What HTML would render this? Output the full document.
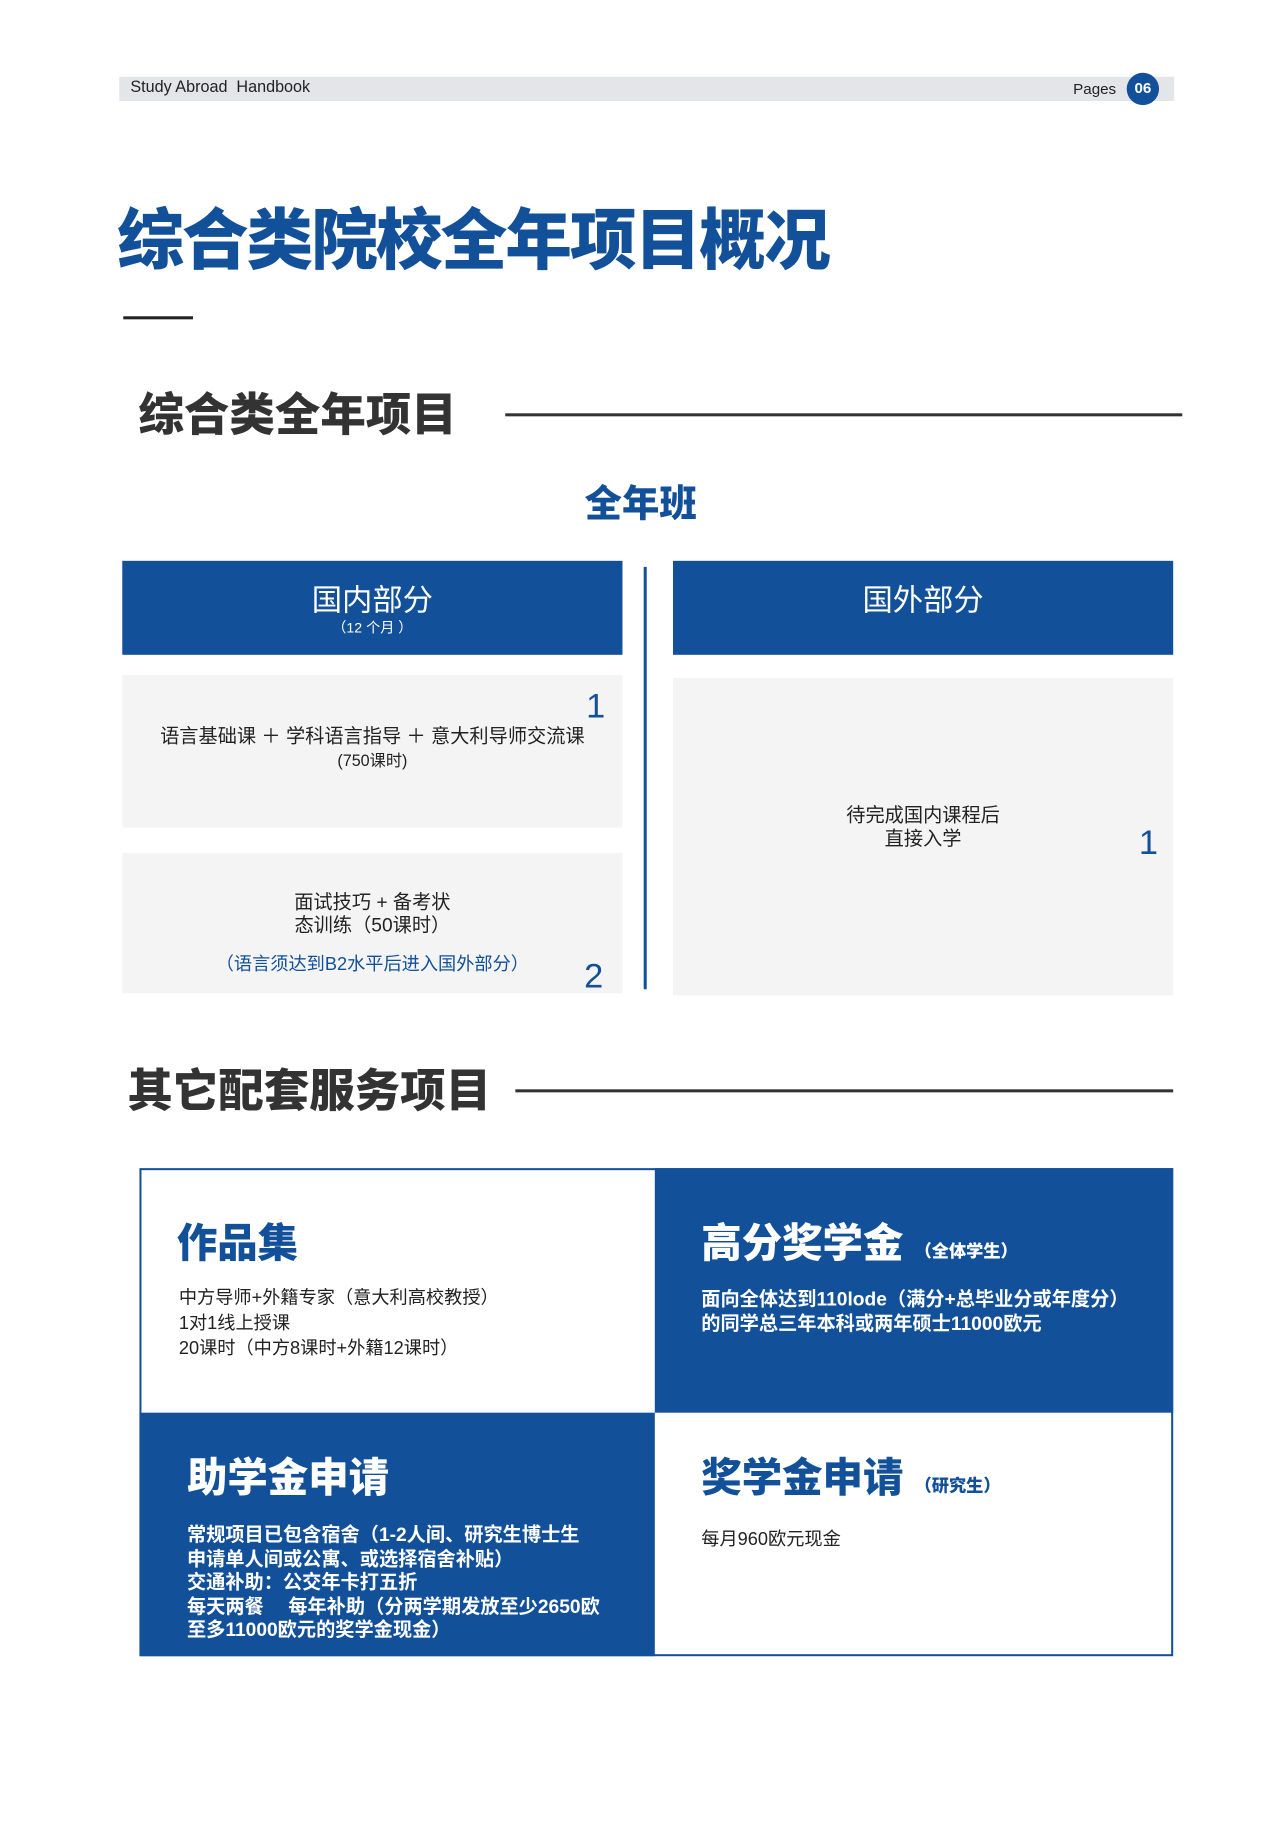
<!DOCTYPE html>
<html><head><meta charset="utf-8"><style>
*{margin:0;padding:0;box-sizing:border-box}
body{width:1280px;height:1810px;background:#fff;position:relative;font-family:"Liberation Sans","Noto Sans CJK SC",sans-serif;color:#222;overflow:hidden}
#w{position:absolute;left:0;top:0;width:1280px;height:1810px;transform:scale(1.0105);transform-origin:0 0}
.a{position:absolute}
.blue{color:#13509a}
.bb{background:#13509a}
.c{text-align:center}
.t{font-size:19px;line-height:23px}
</style></head><body><div id="w">
<div class="a" style="left:118px;top:76px;width:1044px;height:24px;background:#e4e5e8"></div>
<div class="a" style="left:129px;top:78px;font-size:16px">Study Abroad&nbsp; Handbook</div>
<div class="a" style="left:1062px;top:80px;font-size:15px">Pages</div>
<div class="a bb" style="left:1115px;top:72px;width:32px;height:32px;border-radius:50%;color:#fff;font-size:15px;font-weight:bold;line-height:32px;text-align:center">06</div>

<div class="a blue" style="left:116px;top:198px;font-size:66px;font-weight:900;letter-spacing:-2px;line-height:80px">综合类院校全年项目概况</div>
<div class="a" style="left:122px;top:313px;width:69px;height:3px;background:#222"></div>

<div class="a" style="left:137px;top:385px;font-size:45px;font-weight:900;color:#333;line-height:52px">综合类全年项目</div>
<div class="a" style="left:500px;top:409px;width:670px;height:3px;background:#333"></div>

<div class="a blue c" style="left:534px;top:468px;width:200px;font-size:37px;font-weight:900">全年班</div>

<div class="a bb c" style="left:121px;top:555px;width:495px;height:93px;color:#fff;padding-top:24px"><div style="font-size:30px;line-height:32px">国内部分</div><div style="font-size:14px">（12 个月 ）</div></div>
<div class="a bb c" style="left:666px;top:555px;width:495px;height:93px;color:#fff;padding-top:24px"><div style="font-size:30px;line-height:32px">国外部分</div></div>
<div class="a bb" style="left:637px;top:561px;width:3px;height:418px"></div>

<div class="a" style="left:121px;top:668px;width:495px;height:151px;background:#f4f4f5"></div>
<div class="a c t" style="left:121px;top:718px;width:495px">语言基础课 ＋ 学科语言指导 ＋ 意大利导师交流课<br><span style="font-size:16px">(750课时)</span></div>
<div class="a blue" style="left:580px;top:680px;font-size:34px">1</div>

<div class="a" style="left:121px;top:844px;width:495px;height:139px;background:#f4f4f5"></div>
<div class="a c t" style="left:121px;top:882px;width:495px">面试技巧 + 备考状<br>态训练（50课时）</div>
<div class="a c blue" style="left:121px;top:940px;width:495px;font-size:18px">（语言须达到B2水平后进入国外部分）</div>
<div class="a blue" style="left:578px;top:947px;font-size:34px">2</div>

<div class="a" style="left:666px;top:671px;width:495px;height:314px;background:#f4f4f5"></div>
<div class="a c t" style="left:666px;top:796px;width:495px">待完成国内课程后<br>直接入学</div>
<div class="a blue" style="left:1127px;top:815px;font-size:34px">1</div>

<div class="a" style="left:126px;top:1054px;font-size:45px;font-weight:900;color:#333;line-height:52px">其它配套服务项目</div>
<div class="a" style="left:510px;top:1078px;width:651px;height:3px;background:#333"></div>

<div class="a" style="left:138px;top:1156px;width:1023px;height:483px;border:2px solid #13509a"></div>
<div class="a bb" style="left:648px;top:1156px;width:513px;height:242px"></div>
<div class="a bb" style="left:138px;top:1398px;width:510px;height:241px"></div>

<div class="a blue" style="left:175px;top:1198px;font-size:40px;font-weight:900">作品集</div>
<div class="a" style="left:177px;top:1272px;font-size:18px;line-height:25px">中方导师+外籍专家（意大利高校教授）<br>1对1线上授课<br>20课时（中方8课时+外籍12课时）</div>

<div class="a" style="left:694px;top:1198px;font-size:40px;font-weight:900;color:#fff">高分奖学金 <span style="font-size:17px">（全体学生）</span></div>
<div class="a" style="left:694px;top:1275px;font-size:19px;line-height:24px;color:#fff;font-weight:bold">面向全体达到110lode（满分+总毕业分或年度分）<br>的同学总三年本科或两年硕士11000欧元</div>

<div class="a" style="left:185px;top:1430px;font-size:40px;font-weight:900;color:#fff">助学金申请</div>
<div class="a" style="left:185px;top:1508px;font-size:19px;line-height:23.5px;color:#fff;font-weight:bold">常规项目已包含宿舍（1-2人间、研究生博士生<br>申请单人间或公寓、或选择宿舍补贴）<br>交通补助：公交年卡打五折<br>每天两餐　 每年补助（分两学期发放至少2650欧<br>至多11000欧元的奖学金现金）</div>

<div class="a blue" style="left:694px;top:1430px;font-size:40px;font-weight:900">奖学金申请 <span style="font-size:17px">（研究生）</span></div>
<div class="a" style="left:694px;top:1509px;font-size:18px">每月960欧元现金</div>
</div></body></html>
